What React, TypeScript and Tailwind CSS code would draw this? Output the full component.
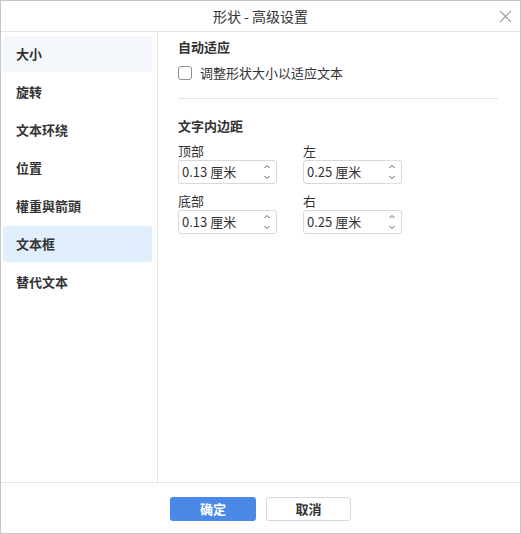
import React from "react";

const font = { fontFamily: '"Noto Sans CJK SC", "Noto Sans", sans-serif' };

function Spin() {
  return (
    <svg width="8" height="18" viewBox="0 0 8 18" className="shrink-0">
      <path d="M1.5 5 L4 2.5 L6.5 5" fill="none" stroke="#555" strokeWidth="1" />
      <path d="M1.5 13 L4 15.5 L6.5 13" fill="none" stroke="#555" strokeWidth="1" />
    </svg>
  );
}

function Field({ label, value }: { label: string; value: string }) {
  return (
    <div>
      <div className="text-[13px] leading-[18px] text-[#333]">{label}</div>
      <div className="h-[24px] w-[99px] border border-[#d9d9d9] rounded-[3px] flex items-center pl-[3px] pr-[5px] justify-between">
        <span className="text-[13px] text-[#333]">{value}</span>
        <Spin />
      </div>
    </div>
  );
}

export default function App() {
  const items = ["大小", "旋转", "文本环绕", "位置", "權重與箭頭", "文本框", "替代文本"];
  return (
    <div style={font} className="w-[521px] h-[534px] border border-[#c6c6c6] bg-white flex flex-col">
      <div className="h-[31px] border-b border-[#e3e3e3] flex items-center justify-center relative shrink-0">
        <span className="text-[14px] text-[#333]">形状 - 高级设置</span>
        <svg className="absolute right-[8px] top-[9px]" width="13" height="13" viewBox="0 0 13 13">
          <path d="M1 1 L12 12 M12 1 L1 12" stroke="#9a9a9a" strokeWidth="1.1" />
        </svg>
      </div>
      <div className="flex-1 flex min-h-0">
        <div className="w-[157px] border-r border-[#e3e3e3] pt-[4px] pl-[2px] pr-[5px] flex flex-col gap-[2px] shrink-0">
          {items.map((t, i) => (
            <div
              key={t}
              className={
                "h-[36px] rounded-[3px] flex items-center pl-[13px] text-[13px] font-semibold text-[#333] " +
                (i === 0 ? "bg-[#f4f8fd]" : i === 5 ? "bg-[#e1eefc]" : "")
              }
            >
              {t}
            </div>
          ))}
        </div>
        <div className="flex-1 pl-[20px] pr-[22px] pt-[5px]">
          <div className="text-[13px] leading-[20px] font-semibold text-[#333]">自动适应</div>
          <div className="flex items-center h-[20px] mt-[6px]">
            <div className="w-[14px] h-[14px] rounded-[3px] border border-[#8f8f8f]" />
            <span className="ml-[8px] text-[13px] text-[#333]">调整形状大小以适应文本</span>
          </div>
          <div className="mt-[15px] h-px bg-[#e3e3e3]" />
          <div className="mt-[17px] text-[13px] leading-[20px] font-semibold text-[#333]">文字内边距</div>
          <div className="mt-[6px] grid grid-cols-[99px_99px] gap-x-[26px] gap-y-[8px]">
            <Field label="顶部" value="0.13 厘米" />
            <Field label="左" value="0.25 厘米" />
            <Field label="底部" value="0.13 厘米" />
            <Field label="右" value="0.25 厘米" />
          </div>
        </div>
      </div>
      <div className="h-[51px] border-t border-[#e3e3e3] shrink-0 flex justify-center gap-[10px] pt-[14px]">
        <button className="w-[86px] h-[24px] rounded-[3px] bg-[#4a89e8] text-white text-[13px] font-semibold">确定</button>
        <button className="w-[85px] h-[24px] rounded-[3px] border border-[#d9d9d9] bg-white text-[#333] text-[13px] font-semibold">取消</button>
      </div>
    </div>
  );
}
